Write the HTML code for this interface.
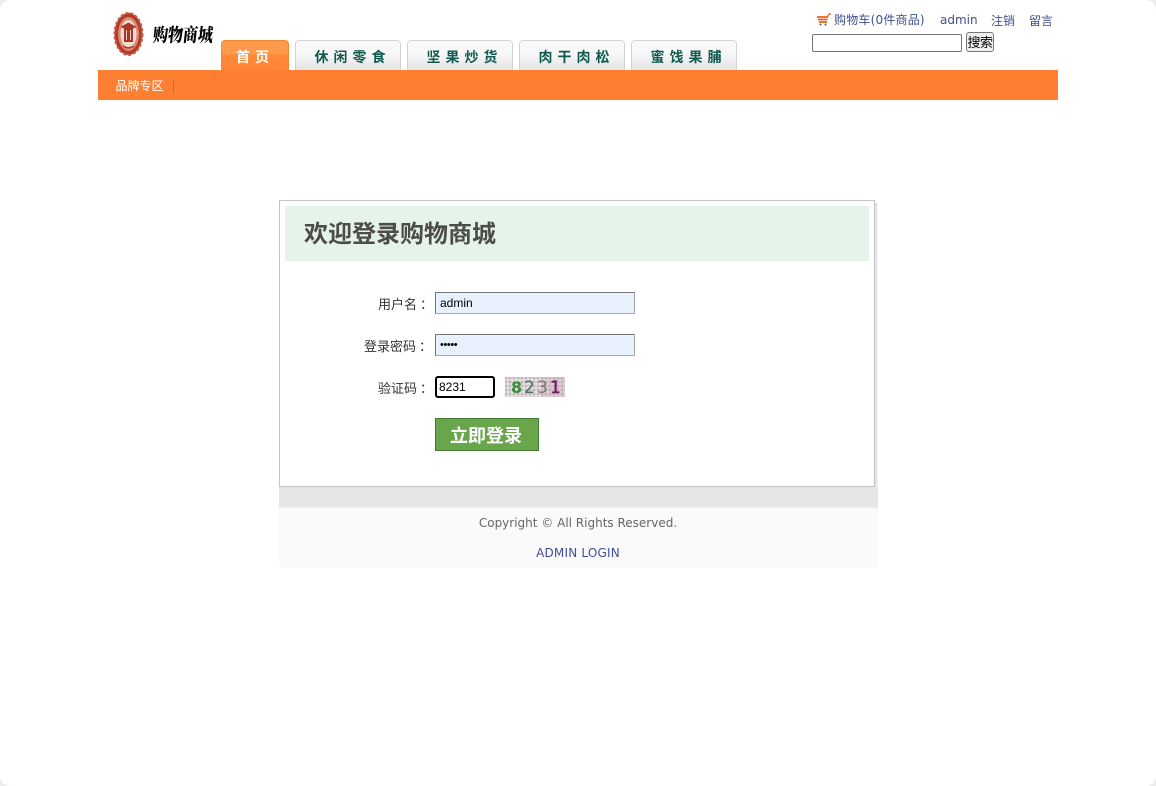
<!DOCTYPE html>
<html lang="zh">
<head>
<meta charset="utf-8">
<title>欢迎登录购物商城</title>
<style>
html,body{margin:0;padding:0;background:#fff;width:1156px;height:786px;overflow:hidden}
body{position:relative;font-family:"Liberation Sans","Noto Sans CJK SC",sans-serif;font-size:12px;color:#333}
.a{position:absolute;white-space:nowrap}
.corner{position:absolute;width:10px;height:10px}
.tab{position:absolute;top:40px;width:104px;height:29px;border:1px solid #d3d3d3;border-bottom:0;border-radius:4px 4px 0 0;background:linear-gradient(#fafafa 0,#f7f7f7 45%,#e4e4e4 100%);color:#0f5a4e;font:bold 14px/32px "Noto Sans CJK SC",sans-serif;text-align:center;letter-spacing:5px;text-indent:9px}
.home{left:221px;width:66px;border-color:#f08a32;background:linear-gradient(#ff9a4d 0,#ff9a4d 45%,#ff8a38 46%,#ff8534 100%);color:#fff;text-indent:0}
.lbl{position:absolute;font:13px/16px "Noto Sans CJK SC",sans-serif;color:#333;white-space:nowrap}
.lbl span{font-family:"Noto Sans CJK TC",sans-serif;position:relative;left:3px}
.in{position:absolute;left:435px;width:200px;height:22px;box-sizing:border-box;background:#e8f0fe;border:1px solid;border-color:#767676 #a9a9a9 #a9a9a9 #767676;font:12px/20px "Liberation Sans",sans-serif;color:#000;padding-left:4px}
</style>
</head>
<body>
<svg class="corner" style="left:0;top:0" viewBox="0 0 10 10"><path d="M0 0H10A10 10 0 0 0 0 10Z" fill="#ececec"/></svg>
<svg class="corner" style="right:0;top:0" viewBox="0 0 10 10"><path d="M10 0H0A10 10 0 0 1 10 10Z" fill="#ececec"/></svg>
<svg class="corner" style="left:0;bottom:0" viewBox="0 0 10 10"><path d="M0 10H10A10 10 0 0 1 0 0Z" fill="#ececec"/></svg>
<svg class="corner" style="right:0;bottom:0" viewBox="0 0 10 10"><path d="M10 10H0A10 10 0 0 0 10 0Z" fill="#ececec"/></svg>

<!-- logo -->
<svg class="a" style="left:111px;top:11px" width="36" height="48" viewBox="0 0 36 48">
<ellipse cx="17.500" cy="23" rx="14" ry="21" fill="#b53a28" stroke="#c9604f" stroke-width="2" stroke-dasharray="3 2"/>
<ellipse cx="17.500" cy="23" rx="10.500" ry="17" fill="#d98a72"/>
<ellipse cx="17.500" cy="23" rx="8" ry="14" fill="#efdccf"/>
<path d="M9.500 16 17.500 11.500 25.500 16 22 17.500V31H13V17.500Z" fill="#a5382a"/>
<path d="M15.500 19V29M19.500 19V29" stroke="#e9c9b8"/>
<path d="M12 35Q17.500 38.500 23 35" stroke="#b53a28" stroke-width="1.500" fill="none"/>
</svg>
<div class="a" style="left:153px;top:22px;font:900 15px/26px 'Noto Serif CJK SC',serif;color:#000;transform:skewX(-6deg) scaleY(1.25)">购物商城</div>

<!-- tabs -->
<div class="tab home">首页</div>
<div class="tab" style="left:295px">休闲零食</div>
<div class="tab" style="left:407px">坚果炒货</div>
<div class="tab" style="left:519px">肉干肉松</div>
<div class="tab" style="left:631px">蜜饯果脯</div>

<!-- top right -->
<svg class="a" style="left:816px;top:13px" width="16" height="13" viewBox="0 0 16 13">
<path d="M1 4H12M2 6.500H11.500M3 9H11" stroke="#e8641b" stroke-width="1.800" fill="none"/>
<path d="M11.500 4 13 1H15" stroke="#e8641b" stroke-width="1.200" fill="none"/>
<circle cx="4.500" cy="11.500" r="1" fill="#555"/><circle cx="9.500" cy="11.500" r="1" fill="#555"/>
</svg>
<div class="a" style="left:834px;top:12px;line-height:17px;color:#3f4e8c;font-family:'DejaVu Sans','Noto Sans CJK SC',sans-serif;font-size:12px;letter-spacing:.2px">购物车(0件商品)</div>
<div class="a" style="left:940px;top:12px;line-height:17px;color:#3f4e8c;font-family:'DejaVu Sans',sans-serif;font-size:12px">admin</div>
<div class="a" style="left:991px;top:12px;line-height:17px;color:#3f4e8c;font-family:'Noto Sans CJK SC',sans-serif;font-size:12px">注销</div>
<div class="a" style="left:1029px;top:12px;line-height:17px;color:#3f4e8c;font-family:'Noto Sans CJK SC',sans-serif;font-size:12px">留言</div>
<div class="a" style="left:812px;top:34px;width:150px;height:18px;box-sizing:border-box;border:1px solid #767676;border-radius:2px;background:#fff"></div>
<div class="a" style="left:966px;top:32px;width:28px;height:20px;box-sizing:border-box;border:1px solid #767676;border-radius:3px;background:#efefef;font:13px/17px 'Noto Sans CJK SC',sans-serif;color:#000;text-align:center;letter-spacing:-.5px">搜索</div>

<!-- orange bar -->
<div class="a" style="left:98px;top:70px;width:960px;height:30px;background:#ff7f32"></div>
<div class="a" style="left:115.500px;top:77px;font:12px/17px 'Noto Sans CJK SC',sans-serif;color:#fff">品牌专区</div>
<div class="a" style="left:173px;top:79px;width:1px;height:14px;background:#e8641b"></div>

<!-- login box -->
<div class="a" style="left:279px;top:487px;width:599px;height:20px;background:#e6e6e6"></div>
<div class="a" style="left:875px;top:203px;width:3px;height:284px;background:linear-gradient(90deg,#dcdcdc,#f6f6f6)"></div>
<div class="a" style="left:279px;top:200px;width:596px;height:287px;box-sizing:border-box;border:1px solid #c4c4c4;background:#fff"></div>
<div class="a" style="left:285px;top:206px;width:584px;height:55px;background:#e6f3e8"></div>
<div class="a" style="left:304px;top:215px;font:bold 24px/34px 'Noto Sans CJK SC',sans-serif;color:#4d4d47">欢迎登录购物商城</div>

<div class="lbl" style="top:296px;left:378px">用户名<span>：</span></div>
<div class="in" style="top:292px">admin</div>
<div class="lbl" style="top:338px;left:364px">登录密码<span>：</span></div>
<div class="in" style="top:334px;font-size:11px;letter-spacing:-.4px">•••••</div>
<div class="lbl" style="top:380px;left:378px">验证码<span>：</span></div>
<div class="in" style="top:376px;width:60px;background:#fff;border:2px solid #000;border-radius:3px;line-height:18px;padding-left:2px">8231</div>

<svg class="a" style="left:505px;top:377px" width="60" height="20" viewBox="0 0 60 20">
<defs><pattern id="n" width="4" height="4" patternUnits="userSpaceOnUse"><rect width="4" height="4" fill="#d8cfd2"/><rect width="2" height="2" fill="#bfb8ba"/><rect x="2" y="2" width="2" height="2" fill="#e8e4e4"/></pattern></defs>
<rect width="60" height="20" fill="url(#n)"/>
<rect x="36" width="24" height="20" fill="#c9a8b8" opacity=".35"/>
<text x="6" y="16" font-family="'DejaVu Sans',sans-serif" font-size="16" font-weight="bold" fill="#3d8a3a">8</text>
<text x="19" y="16" font-family="'DejaVu Sans',sans-serif" font-size="17" fill="#4c6a6e">2</text>
<text x="32" y="16" font-family="'DejaVu Sans',sans-serif" font-size="17" fill="#7a7472">3</text>
<text x="45" y="16" font-family="'DejaVu Sans',sans-serif" font-size="17" fill="#6d1a5c" stroke="#6d1a5c" stroke-width=".4">1</text>
</svg>

<div class="a" style="left:435px;top:418px;width:104px;height:33px;box-sizing:border-box;border:1px solid #3f7a30;background:#68a54b"></div>
<div class="a" style="left:434px;top:418px;width:104px;height:33px;padding:0 1px 0 0;color:#fff;font:bold 18px/34px 'Noto Sans CJK SC',sans-serif;text-align:center">立即登录</div>

<!-- footer -->
<div class="a" style="left:279px;top:507px;width:599px;height:61px;box-sizing:border-box;border-top:1px solid #ededed;background:#fafafa;border-radius:0 0 0 6px"></div>
<div class="a" style="left:279px;width:598px;top:515px;text-align:center;font:12px/17px 'DejaVu Sans',sans-serif;color:#666">Copyright © All Rights Reserved.</div>
<div class="a" style="left:279px;width:598px;top:545px;text-align:center;font:12px/17px 'DejaVu Sans',sans-serif;color:#3f4e9c;letter-spacing:.2px">ADMIN LOGIN</div>
</body>
</html>
